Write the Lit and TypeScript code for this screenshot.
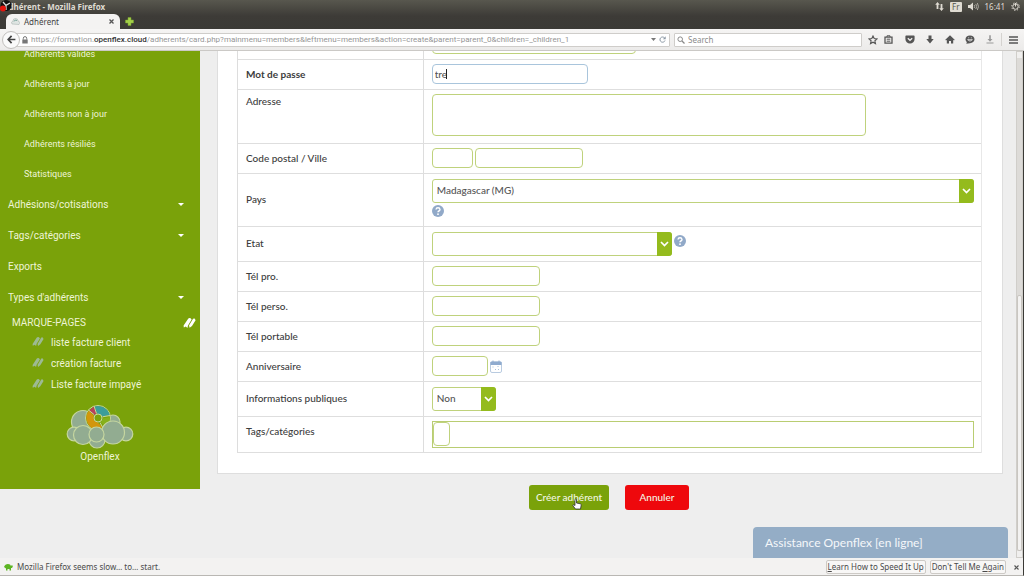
import { LitElement, html, css, svg, nothing } from "lit";
import { customElement } from "lit/decorators.js";
import { classMap } from "lit/directives/class-map.js";

const bookmark = svg`
  <path d="M.6 8.600 5 1.900Q6 .6 7.600 1.300L8.600 2.600 5 8.400 4.400 11 2.800 9.600.8 10.600Z"/>
  <path d="M6 8.600 9.600 2.400Q10.400 1 11.600 1.600L12.600 3.200 9 8.900 6.600 10.800Z"/>`;

@customElement("browser-chrome")
class BrowserChrome extends LitElement {
  static styles = css`
    :host { display: block; font: 8px/12px "Noto Sans", sans-serif; }
    svg { display: block; flex: none; }
    button { all: unset; display: grid; place-items: center; cursor: pointer; }
    .top { background: linear-gradient(#58574e, #3d3b37 16px, #3b3a36); color: #dfdbd2; }
    .title { display: flex; align-items: center; height: 13px; padding: 0 4px 0 3px; position: relative; }
    .title h1 { margin: 0; font: bold 8px/12px "Noto Sans", sans-serif; flex: 1; }
    .rec { position: absolute; left: 0; top: 0; }
    .tray { display: flex; align-items: center; gap: 6px; }
    .lang { background: #dfdbd2; color: #55534b; line-height: 10px; padding: 0 2px; border-radius: 1px; }
    .tabs { display: flex; align-items: center; height: 16px; padding-left: 6px; gap: 5px; }
    .tab { display: flex; align-items: center; gap: 4px; width: 114px; height: 15px; align-self: flex-end;
      padding: 0 6px 0 5px; box-sizing: border-box; background: #f4f3f2; color: #444; border-radius: 6px 6px 0 0; }
    .tab span { flex: 1; }
    .bar { display: flex; align-items: center; height: 22px; box-sizing: border-box; padding: 0 6px 0 2px;
      background: linear-gradient(#f5f4f3, #ecebea); border-bottom: 1px solid #cbc9c6; }
    .back { width: 16px; height: 16px; border: 1px solid #c2c0bd; border-radius: 50%; background: #fafafa; z-index: 1; }
    .url { flex: 1; display: flex; align-items: center; height: 12px; margin-left: -5px; padding: 0 3px 0 6px;
      border: 1px solid #cfcdca; background: #fff; border-radius: 1px; gap: 3px; min-width: 0; }
    .address { flex: 1; color: #969696; white-space: nowrap; overflow: hidden; outline: none; font-family: Roboto, sans-serif; }
    .address b { font-weight: 500; color: #333; }
    .search { display: flex; align-items: center; width: 182px; height: 12px; margin: 0 6px 0 4px; padding: 0 2px;
      border: 1px solid #cfcdca; background: #fff; border-radius: 1px; gap: 3px; }
    .search input { border: 0; padding: 0; outline: 0; flex: 1; min-width: 0; background: none; font: inherit; color: #444; }
    .search input::placeholder { color: #8b8b8b; opacity: 1; }
    .tools { display: flex; align-items: center; gap: 10px; }
    .pair { display: flex; gap: 6px; margin-right: 2px; }
    .menu { border-left: 1px solid #d5d3d0; padding-left: 7px; margin-left: -4px; height: 13px; }
  `;
  render() {
    return html`
      <div class="top">
        <div class="title">
          <h1>Adhérent - Mozilla Firefox</h1>
          <svg class="rec" width="12" height="12" viewBox="0 0 12 12"><circle cx="6" cy="5.5" r="5.5" fill="#111"/><path d="M3 2 6 5.4 10 3M6 5.4V10" stroke="#ddd" stroke-width="1.3" fill="none"/><circle cx="3" cy="8.5" r="3" fill="#e3160f"/></svg>
          <div class="tray">
            <svg width="9" height="9" viewBox="0 0 9 9" fill="#dfdbd2"><path d="M2.5 0 4.8 2.8H3.4V7H1.6V2.8H.2ZM6.5 9 4.2 6.2h1.4V2h1.8v4.2h1.4Z"/></svg>
            <span class="lang">Fr</span>
            <svg width="11" height="9" viewBox="0 0 11 9"><path d="M0 3h2l3-2.5v8L2 6H0Z" fill="#dfdbd2"/><path d="M6.2 3q1 1.5 0 3M7.8 2q1.8 2.5 0 5M9.3 1q2.4 3.5 0 7" stroke="#aaa79f" fill="none"/></svg>
            <span>16:41</span>
            <svg width="9" height="9" viewBox="0 0 9 9" fill="none" stroke="#dfdbd2"><circle cx="4.5" cy="4.6" r="2.7"/><circle cx="4.5" cy="4.6" r="3.8" stroke-dasharray="1.3 1.7"/><path d="M4.5 1v3.5"/></svg>
          </div>
        </div>
        <div class="tabs">
          <div class="tab">
            <svg width="9" height="8" viewBox="0 0 9 8"><path d="M1 6a2 2 0 0 1 1-3 2.5 2.5 0 0 1 5 0 2 2 0 0 1 1 3.5Z" fill="#dfe5e3" stroke="#a9b5b2" stroke-width=".6"/><path d="M3 3.5a2 2 0 0 1 3-1" stroke="#7ba69c" fill="none"/></svg>
            <span>Adhérent</span>
            <button aria-label="Fermer l'onglet"><svg width="5" height="5" viewBox="0 0 5 5"><path d="M.5.5l4 4m0-4-4 4" stroke="#555" stroke-width="1.3"/></svg></button>
          </div>
          <button aria-label="Nouvel onglet"><svg width="9" height="9" viewBox="0 0 9 9"><path d="M3 .5h3V3h2.5v3H6v2.5H3V6H.5V3H3Z" fill="#a3cf48" stroke="#7ba52e" stroke-width=".5"/></svg></button>
        </div>
      </div>
      <div class="bar">
        <button class="back" aria-label="Retour"><svg width="9" height="9" viewBox="0 0 9 9"><path d="M4.6.8 1.2 4.5l3.4 3.7M1.4 4.5H8.4" stroke="#444" stroke-width="1.7" fill="none"/></svg></button>
        <div class="url">
          <svg width="6" height="8" viewBox="0 0 6 8"><path d="M.3 3.5h5.4v4H.3Z" fill="#777"/><path d="M1.3 3.6V2.3a1.7 1.7 0 0 1 3.4 0v1.3" stroke="#777" fill="none"/></svg>
          <div class="address" role="textbox" aria-label="Adresse" contenteditable="true">https://formation.<b>openflex.cloud</b>/adherents/card.php?mainmenu=members&amp;leftmenu=members&amp;action=create&amp;parent=parent_0&amp;children=_children_1</div>
          <svg width="5" height="3" viewBox="0 0 5 3"><path d="M0 0h5L2.5 3Z" fill="#777"/></svg>
          <button aria-label="Actualiser"><svg width="7" height="7" viewBox="0 0 7 7"><path d="M5.6 2A2.6 2.6 0 1 0 6 4.5" stroke="#8a97a3" fill="none"/><path d="M6.7.3v2.9H3.9Z" fill="#8a97a3"/></svg></button>
        </div>
        <label class="search">
          <svg width="8" height="8" viewBox="0 0 8 8" fill="none" stroke="#888"><circle cx="3.2" cy="3.2" r="2.3"/><path d="m5 5 2.5 2.5" stroke-width="1.3"/></svg>
          <input type="search" placeholder="Search" aria-label="Search">
        </label>
        <div class="tools">
          <div class="pair">
            <button aria-label="Marquer"><svg width="10" height="10" viewBox="0 0 10 10"><path d="m5 1 1.2 2.6 2.8.3-2.1 1.9.6 2.8L5 7.2 2.5 8.6l.6-2.8L1 3.9l2.8-.3Z" fill="none" stroke="#555" stroke-width="1.1"/></svg></button>
            <button aria-label="Marque-pages"><svg width="9" height="9" viewBox="0 0 9 9"><path d="M1 2.2h7v6H1Z" fill="none" stroke="#555" stroke-width="1.3"/><path d="M3 2V.8h3V2M2.7 4.2h3.6M2.7 6.2h3.6" stroke="#555" fill="none"/></svg></button>
          </div>
          <button aria-label="Pocket"><svg width="10" height="9" viewBox="0 0 10 9"><path d="M1.2.5h7.6q.8 0 .8.8V4a4.6 4.6 0 0 1-9.2 0V1.300q0-.8.8-.8Z" fill="#555"/><path d="M2.8 3.200 5 5.300l2.200-2.100" stroke="#f2f1f0" stroke-width="1.200" fill="none"/></svg></button>
          <button aria-label="Téléchargements"><svg width="10" height="9" viewBox="0 0 10 9"><path d="M3.500.5h3v3.500h2.200L5 8.500 1.300 4h2.200Z" fill="#555"/></svg></button>
          <button aria-label="Accueil"><svg width="10" height="9" viewBox="0 0 10 9"><path d="M5 .3 9.700 4.700 9 5.400 8.200 4.800V8.600H6V6H4v2.600H1.800V4.800L1 5.400.3 4.700Z" fill="#555"/></svg></button>
          <button aria-label="Discussion"><svg width="10" height="9" viewBox="0 0 10 9"><path d="M5 .4c2.600 0 4.500 1.600 4.500 3.900S7.600 8.200 5 8.200L1.300 8.800l.6-1.700C1 6.400.5 5.400.5 4.300.5 2 2.400.4 5 .4Z" fill="#555"/><path d="M2.600 4.700q2.400 3 4.800 0ZM3.200 2.800h1M5.800 2.800h1" stroke="#eee" stroke-width=".8" fill="none"/></svg></button>
          <button aria-label="Télécharger"><svg width="10" height="9" viewBox="0 0 10 9"><path d="M4.200.3h1.600V4h1.700L5 6.800 2.500 4h1.700ZM1.500 7.600h7v.9h-7Z" fill="#999"/></svg></button>
          <button class="menu" aria-label="Menu"><svg width="9" height="8" viewBox="0 0 9 8"><path d="M0 1h9M0 4h9M0 7h9" stroke="#555" stroke-width="1.700"/></svg></button>
        </div>
      </div>`;
  }
}

@customElement("side-menu")
class SideMenu extends LitElement {
  static styles = css`
    :host { display: block; background: #7aa20a; color: #eef4d6; font: 10px/12px Roboto, sans-serif; }
    nav { padding: 9px 0 26px; display: flex; flex-direction: column; }
    a { color: inherit; text-decoration: none; display: flex; align-items: center; }
    .sub { height: 30px; padding-left: 24px; font-size: 9px; }
    .main { height: 31px; padding: 0 16px 0 8px; justify-content: space-between; }
    .head { display: flex; align-items: center; justify-content: space-between; height: 19px; padding: 0 4px 0 12px;
      margin: 0; font: inherit; }
    .mark { height: 21px; padding-left: 32px; gap: 7px; }
    .mark svg { fill: #9dba93; margin-bottom: 3px; }
    .head svg { fill: #fff; }
    .logo { flex-direction: column; padding-top: 9px; gap: 1px; }
  `;
  render() {
    return html`<nav>
      ${["Adhérents valides", "Adhérents à jour", "Adhérents non à jour", "Adhérents résiliés", "Statistiques"].map(
        (t) => html`<a class="sub" href="#">${t}</a>`)}
      ${([["Adhésions/cotisations", true], ["Tags/catégories", true], ["Exports", false], ["Types d'adhérents", true]] as [string, boolean][]).map(
        ([t, more]) => html`<a class="main" href="#">${t}${more
          ? html`<svg width="6" height="3" viewBox="0 0 6 3"><path d="M0 0h6L3 3Z" fill="#fff"/></svg>` : nothing}</a>`)}
      <h2 class="head">MARQUE-PAGES<svg width="13" height="12" viewBox="0 0 13 12">${bookmark}</svg></h2>
      ${["liste facture client", "création facture", "Liste facture impayé"].map(
        (t) => html`<a class="mark" href="#"><svg width="12" height="11" viewBox="0 0 13 12">${bookmark}</svg>${t}</a>`)}
      <a class="logo" href="#">
        <svg width="68" height="46" viewBox="0 0 68 46">
          <g fill="#92ac91" stroke="#c5d6a0" stroke-width="1.200">
            <circle cx="17" cy="18" r="11.500"/><circle cx="47" cy="18" r="7"/><circle cx="8" cy="30" r="6.800"/>
            <circle cx="60" cy="30" r="6.800"/><circle cx="31" cy="36" r="8"/><circle cx="17" cy="31" r="9.500"/>
          </g>
          <circle cx="32" cy="14" r="12.500" fill="#7aa20a" stroke="#c5d6a0"/>
          <path d="M23 6.500A12 12 0 0 0 33 25.900L36 23 32 18.500A4.500 4.500 0 0 1 28 12Z" fill="#d2960c"/>
          <path d="M28.500 2.500A12 12 0 0 1 43.600 11L36.500 12.500 31 9.500Z" fill="#3c9d9b"/>
          <path d="M23 6.500 28 2.600 30.500 9.500 28 11Z" fill="#b8405a"/>
          <path d="M36.500 14.500 43.800 13A12 12 0 0 1 40 22L35 19Z" fill="#86b01c"/>
          <path d="M28 10.500 22.500 6M30.500 9.500 28 2M36.500 12.800 44 11.500M34 18.500 37 24" stroke="#c5d6a0"/>
          <circle cx="32" cy="14" r="4" fill="#7aa20a" stroke="#c5d6a0"/>
          <g fill="#92ac91" stroke="#c5d6a0" stroke-width="1.200"><circle cx="47" cy="28.500" r="11.500"/><circle cx="30.500" cy="30.500" r="7.500"/></g>
        </svg>
        Openflex
      </a>
    </nav>`;
  }
}

@customElement("member-form")
class MemberForm extends LitElement {
  static styles = css`
    :host { display: block; color: #3c3c3c; font: 10px/14px Lato, sans-serif; }
    .card { background: #fff; border: 1px solid #dedede; border-top: 0; margin: 0 13px 0 17px; padding: 0 20px 20px 19px; }
    table { width: 100%; border-spacing: 0; table-layout: fixed; border-left: 1px solid #ddd; border-right: 1px solid #e8e8e8; box-sizing: border-box; }
    th, td { border-bottom: 1px solid #dedede; padding: 0 8px 2px; box-sizing: border-box; height: 30px; vertical-align: middle; text-align: left; font-weight: 500; }
    td { padding-right: 7px; padding-bottom: 1px; }
    th { width: 25%; border-right: 1px solid #ddd; }
    .bold { font-weight: 700; }
    .h54 > * { height: 54px; } .h53 > * { height: 53px; } .h35 > * { height: 35px; } .h36 > * { height: 36px; }
    .h54 > *, .h36 > th { vertical-align: top; padding-top: 4px; }
    .h36 > th { padding-top: 7px; }
    .h53 > td { padding-bottom: 4px; }
    .row { display: flex; align-items: center; gap: 2px; position: relative; }
    .wrap { flex-wrap: wrap; }
    input, textarea, select { box-sizing: border-box; font: inherit; color: #555; border: 1px solid #bfd27c; border-radius: 4px;
      background: #fff; padding: 0 3px; margin: 0; outline: 0; height: 20px; }
    textarea { display: block; height: 42px; width: 80%; max-width: 100%; resize: none; }
    select { appearance: none; grid-area: 1 / 1; height: 24px; width: 100%; border-radius: 3px; padding: 0 18px 2px 4px; }
    .select { display: grid; }
    .arrow { grid-area: 1 / 1; justify-self: end; width: 15px; background: #94bb1d; border-radius: 0 3px 3px 0; pointer-events: none; display: grid; place-items: center; }
    .full { width: 100%; } .state { width: 240px; } .yes { width: 64px; }
    .w156 { width: 156px; } .w204 { width: 204px; } .w108 { width: 108px; } .w41 { width: 41px; } .w56 { width: 56px; }
    .focus { border-color: #a9c5dc; padding-left: 2px; }
    .caret { position: absolute; left: 14px; top: 5px; width: 1px; height: 10px; background: #222; }
    .up { margin-bottom: 5px; }
    .tags { border: 1px solid #b9cd72; height: 27px; box-sizing: border-box; display: flex; align-items: center; }
    .tags input { width: 17px; height: 24px; }
    .actions { display: flex; justify-content: center; gap: 16px; padding: 11px 15px 0 17px; }
    .actions button { border: 0; border-radius: 3px; height: 25px; padding: 0 0 2px; width: 80px; font: inherit; font-weight: 500; color: #f3f7e4; background: #7aa20a; position: relative; }
    .actions .cancel { background: #ee080c; width: 64px; }
    .hand { position: absolute; left: 43px; top: 13px; }
    svg { display: block; flex: none; }
  `;
  private help = html`<svg width="12" height="12" viewBox="0 0 12 12"><circle cx="6" cy="6" r="6" fill="#91a9c8"/><path d="M4 4.500Q4.200 2.800 6 2.800T8 4.500Q8 5.500 6.900 6 6 6.400 6 7.300" fill="none" stroke="#fff" stroke-width="1.400"/><circle cx="6" cy="9.200" r=".9" fill="#fff"/></svg>`;
  private pick(id: string, cls: string, value: string) {
    return html`<span class="select ${cls}"><select id=${id}><option>${value}</option></select><span class="arrow"><svg width="9" height="6" viewBox="0 0 9 6"><path d="m1 1 3.500 3.500L8 1" fill="none" stroke="#fff" stroke-width="1.700"/></svg></span></span>`;
  }
  private line(id: string, label: string, field: unknown, cls = "", bold = false) {
    return html`<tr class=${cls}><th scope="row"><label for=${id} class=${classMap({ bold })}>${label}</label></th><td>${field}</td></tr>`;
  }
  render() {
    return html`<form @submit=${(e: Event) => e.preventDefault()}>
      <div class="card"><table><tbody>
        <tr><th></th><td><div class="row"><input class="w204" aria-label="Identifiant"></div></td></tr>
        ${this.line("pass", "Mot de passe", html`<div class="row"><input id="pass" class="w156 focus" .value=${"tre"}><i class="caret"></i></div>`, "", true)}
        ${this.line("addr", "Adresse", html`<textarea id="addr"></textarea>`, "h54")}
        ${this.line("zip", "Code postal / Ville", html`<div class="row"><input id="zip" class="w41"><input class="w108" aria-label="Ville"></div>`)}
        ${this.line("country", "Pays", html`<div class="row wrap">${this.pick("country", "full", "Madagascar (MG)")}${this.help}</div>`, "h53")}
        ${this.line("state", "Etat", html`<div class="row">${this.pick("state", "state", "")}<span class="up">${this.help}</span></div>`, "h35")}
        ${this.line("tel1", "Tél pro.", html`<div class="row"><input id="tel1" class="w108" type="tel"></div>`)}
        ${this.line("tel2", "Tél perso.", html`<div class="row"><input id="tel2" class="w108" type="tel"></div>`)}
        ${this.line("tel3", "Tél portable", html`<div class="row"><input id="tel3" class="w108" type="tel"></div>`)}
        ${this.line("birth", "Anniversaire", html`<div class="row"><input id="birth" class="w56"><svg width="12" height="13" viewBox="0 0 12 13"><rect x=".5" y="1.500" width="11" height="11" rx="1.500" fill="#fff" stroke="#b9cbe0"/><path d="M.5 2h11v3H.5Z" fill="#8fabcf"/><path d="M3 .5v2M9 .5v2" stroke="#8fabcf"/><path d="M2.500 7h1M7.500 6.500h1M5 9.500h1M8 9.500h1" stroke="#a9c0da"/></svg></div>`)}
        ${this.line("public", "Informations publiques", this.pick("public", "yes", "Non"), "h35")}
        ${this.line("tags", "Tags/catégories", html`<div class="tags"><input id="tags"></div>`, "h36")}
      </tbody></table></div>
      <div class="actions">
        <button type="submit">Créer adhérent<svg class="hand" width="10" height="12" viewBox="0 0 10 12"><path d="M3 1.500q.8-.8 1.500 0V5l4 .8q.8.4.7 1.200L8.500 11H3.500L.8 7.500q0-1 1.200-.6l1 .6Z" fill="#fff" stroke="#333" stroke-width=".8"/></svg></button>
        <button type="button" class="cancel">Annuler</button>
      </div>
    </form>`;
  }
}

@customElement("app-root")
class AppRoot extends LitElement {
  static styles = css`
    :host { display: flex; flex-direction: column; height: 100vh; overflow: hidden; background: #eee; font-family: "Noto Sans", sans-serif; }
    .view { flex: 1; min-height: 0; display: flex; overflow: hidden; position: relative; border-right: 1px solid #3b3a36; }
    .page { flex: 1; min-width: 0; display: flex; align-items: flex-start; margin-top: -21px; }
    side-menu { width: 200px; flex: none; }
    member-form { flex: 1; min-width: 0; }
    .scroll { width: 5px; border: 1px solid #d0ceca; background: #dddbd8; display: flex; flex-direction: column; }
    .space { flex: 240; } .thumb { flex: 257; background: #f3f2f1; border: 1px solid #c9c6c1; border-radius: 2px; }
    .end { height: 6px; background: #f0efee; }
    .chat { position: absolute; right: 15px; bottom: 0; width: 255px; height: 31px; border: 0; border-radius: 4px 4px 0 0;
      background: #94adc6; color: #f4f7fa; font: 12px/16px Lato, sans-serif; text-align: left; padding: 0 12px; }
    .notice { display: flex; align-items: center; gap: 4px; height: 18px; box-sizing: border-box; padding: 0 4px;
      background: #f3f2f1; border-bottom: 1px solid #b9b7b3; border-right: 1px solid #3b3a36; font: 8px/12px "Noto Sans", sans-serif; color: #4a4a4a; }
    .notice span { flex: 1; }
    .notice button { font: inherit; color: inherit; background: #f8f7f6; border: 1px solid #cdcac6; border-radius: 2px; padding: 0 1px; }
    .notice button.x { border: 0; background: none; padding: 0 0 0 4px; }
  `;
  render() {
    return html`
      <browser-chrome></browser-chrome>
      <div class="view">
        <div class="page"><side-menu></side-menu><member-form></member-form></div>
        <div class="scroll"><div class="end"></div><div class="space"></div><div class="thumb"></div><div class="end"></div></div>
        <button class="chat">Assistance Openflex [en ligne]</button>
      </div>
      <div class="notice">
        <svg width="9" height="8" viewBox="0 0 9 8"><path d="M0 4Q1 1 4 1q2.500 0 3 2 .5-1 1.500-.5Q9.300 3.500 8 5H7v2.500H5.500V6h-2v1.500H2V5.500Z" fill="#5db523"/></svg>
        <span>Mozilla Firefox seems slow… to… start.</span>
        <button><u>L</u>earn How to Speed It Up</button>
        <button>Don't Tell Me <u>A</u>gain</button>
        <button class="x" aria-label="Fermer"><svg width="5" height="5" viewBox="0 0 5 5"><path d="M.5.5l4 4m0-4-4 4" stroke="#555" stroke-width="1.200"/></svg></button>
      </div>`;
  }
}
